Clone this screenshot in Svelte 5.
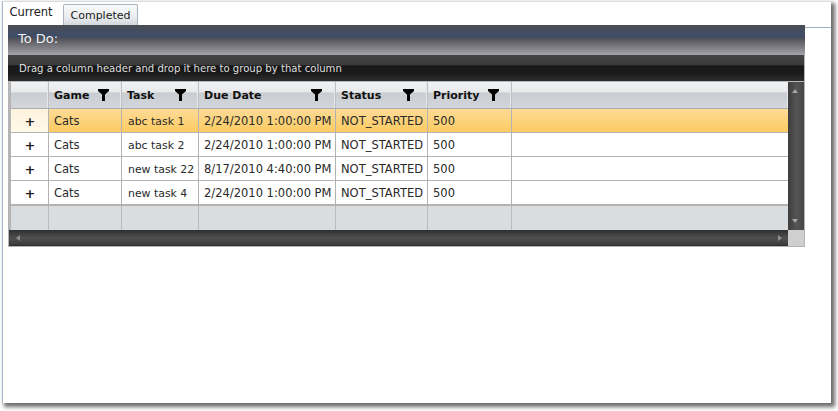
<script>
  const columns = [
    { name: 'Game', width: 73 },
    { name: 'Task', width: 77 },
    { name: 'Due Date', width: 137 },
    { name: 'Status', width: 92 },
    { name: 'Priority', width: 84 }
  ];
  const rows = [
    { task: 'abc task 1', due: '2/24/2010 1:00:00 PM', selected: true },
    { task: 'abc task 2', due: '2/24/2010 1:00:00 PM' },
    { task: 'new task 22', due: '8/17/2010 4:40:00 PM' },
    { task: 'new task 4', due: '2/24/2010 1:00:00 PM' }
  ];
</script>

<div class="page">
<div class="window">
  <div class="tabs">
    <div class="tab active">Current</div>
    <div class="tab">Completed</div>
    <div class="tabline"></div>
  </div>
  <div class="content">
    <div class="title">To Do:</div>
    <div class="gridbox">
      <div class="grouppanel">Drag a column header and drop it here to group by that column</div>
      <div class="gridbody">
        <div class="datacol">
          <div class="gridrow head">
            <div class="cell indent"></div>
            {#each columns as c}
              <div class="cell" style="width:{c.width}px">
                <span class="hname">{c.name}</span>
                <svg class="funnel" width="11" height="12" viewBox="0 0 11 12"><path d="M0 0H11V2L7 5.5V12H4V5.5L0 2Z" fill="#000"/></svg>
              </div>
            {/each}
            <div class="cell fill"></div>
          </div>
          {#each rows as r}
            <div class="gridrow data" class:selected={r.selected}>
              <div class="cell indent"><span class="plus">+</span></div>
              <div class="cell" style="width:73px">Cats</div>
              <div class="cell task" style="width:77px">{r.task}</div>
              <div class="cell" style="width:137px">{r.due}</div>
              <div class="cell" style="width:92px">NOT_STARTED</div>
              <div class="cell" style="width:84px">500</div>
              <div class="cell fill"></div>
            </div>
          {/each}
          <div class="gridrow foot">
            <div class="cell indent"></div>
            {#each columns as c}
              <div class="cell" style="width:{c.width}px"></div>
            {/each}
            <div class="cell fill"></div>
          </div>
        </div>
        <div class="vscroll">
          <i class="arrow up"></i>
          <i class="arrow down"></i>
        </div>
      </div>
      <div class="hbar">
        <div class="hscroll">
          <i class="arrow left"></i>
          <i class="arrow right"></i>
        </div>
        <div class="corner"></div>
      </div>
    </div>
  </div>
</div>
</div>

<style>
  :global(body) {
    margin: 0;
    background: #fff;
  }
  .page {
    box-sizing: border-box;
    height: 411px;
    padding: 1px 0 0 2px;
    overflow: hidden;
  }
  .window {
    box-sizing: border-box;
    width: 829px;
    height: 402px;
    background: #fff;
    border-top: 1px solid #dcdcdc;
    border-left: 1px solid #a9b8cc;
    box-shadow: 3px 3px 4px 1px rgba(60, 60, 60, 0.75);
    font: 11.5px/1 "DejaVu Sans", Verdana, sans-serif;
    color: #2a2a2a;
  }
  .tabs {
    display: flex;
    align-items: flex-end;
    height: 25px;
  }
  .tab {
    box-sizing: border-box;
    display: flex;
    align-items: center;
    justify-content: center;
    color: #222;
  }
  .tab.active {
    width: 60px;
    height: 25px;
    padding: 0 4px 5px 0;
    background: #fff;
    position: relative;
    z-index: 2;
    margin-bottom: -1px;
  }
  .tab:not(.active) {
    width: 75px;
    height: 23px;
    font-size: 11px;
    border: 1px solid #a9b4be;
    border-bottom-color: #8f9aa5;
    border-radius: 2px 2px 0 0;
    background: linear-gradient(#f8f9fa, #e9ebee 60%, #cfd4d9);
  }
  .tabline {
    flex: 1;
    height: 1px;
    background: #9fb0bd;
    margin-bottom: -1px;
  }
  .content {
    margin-left: 5px;
    width: 797px;
    position: relative;
    z-index: 3;
    margin-top: -2px;
  }
  .title {
    box-sizing: border-box;
    height: 30px;
    padding: 7px 0 0 10px;
    color: #f2f2f2;
    font-size: 13px;
    background: linear-gradient(#4a4d55 0, #3e4d69 38%, #454a56 40%, #6b6b70 62%, #a5a3ae 100%);
  }
  .gridbox {
    box-sizing: border-box;
    width: 797px;
    height: 192px;
    border-right: 1px solid #b4b4b4;
    border-bottom: 1px solid #b4b4b4;
    border-left: 1px solid #b4b4b4;
    background: #fff;
  }
  .grouppanel {
    box-sizing: border-box;
    height: 27px;
    margin-left: -1px;
    width: 796px;
    padding: 9px 0 0 11px;
    color: #dedede;
    font-size: 10.1px;
    background: linear-gradient(#454545 0, #3a3a3a 38%, #171717 42%, #1b1b1b 70%, #2b2d30 100%);
    border-bottom: 1px solid #b8b8b8;
  }
  .gridbody {
    display: flex;
    height: 148px;
    border-left: 2px solid #b5b5b5;
  }
  .datacol {
    flex: 1;
    display: flex;
    flex-direction: column;
    background: #fff;
  }
  .gridrow {
    display: flex;
    box-sizing: border-box;
    border-bottom: 1px solid #b3b3b3;
  }
  .cell {
    box-sizing: border-box;
    display: flex;
    align-items: center;
    padding: 3px 0 0 5px;
    border-right: 1px solid #b3b3b3;
    flex: none;
  }
  .cell.task {
    font-size: 10.9px;
    padding-left: 6px;
  }
  .cell.indent {
    width: 38px;
    justify-content: center;
    padding: 1px 0 0;
  }
  .cell.fill {
    flex: 1;
    border-right: 0;
  }
  .head {
    height: 27px;
    background: linear-gradient(#f0f1f3 0, #e9eaec 38%, #c9ccd0 42%, #d3d6da 100%);
    border-bottom-color: #aaaab2;
  }
  .head .cell {
    border-right-color: #bcbfc3;
    box-shadow: inset -1px 0 0 #e8e9eb;
    position: relative;
    padding-top: 1px;
  }
  .hname {
    font-weight: bold;
    color: #111;
    font-size: 11px;
  }
  .funnel {
    position: absolute;
    left: 49px;
    top: 7px;
  }
  .head .cell:nth-child(3) .funnel { left: 53px; }
  .head .cell:nth-child(4) .funnel { left: 112px; }
  .head .cell:nth-child(5) .funnel { left: 67px; }
  .head .cell:nth-child(6) .funnel { left: 60px; }
  .data {
    height: 24px;
  }
  .data.selected {
    background: linear-gradient(#fddb96, #fccb62);
  }
  .data.selected .indent {
    background: linear-gradient(#fdf3dd, #fff9ea);
  }
  .plus {
    font: bold 13px/1 "DejaVu Sans", sans-serif;
    color: #222;
    margin-left: 1px;
  }
  .foot {
    height: 25px;
    background: #dadde0;
    border-top: 1px solid #b3b3b3;
    border-bottom: 0;
  }
  .foot .cell {
    border-right-color: #b9bbbe;
  }
  .vscroll {
    position: relative;
    width: 16px;
    flex: none;
    background: linear-gradient(90deg, #3d3d3d, #555 55%, #454545);
  }
  .hbar {
    display: flex;
    height: 16px;
  }
  .hscroll {
    position: relative;
    flex: 1;
    background: linear-gradient(#2f2f2f 0, #4f4f4f 50%, #3e3e3e 90%, #2a2a2a 100%);
  }
  .corner {
    width: 16px;
    background: #cfcfcf;
  }
  .arrow {
    position: absolute;
    width: 0;
    height: 0;
  }
  .arrow.up {
    top: 7px;
    left: 4px;
    border: 3px solid transparent;
    border-top: 0;
    border-left-width: 3.5px;
    border-right-width: 3.5px;
    border-bottom: 4px solid #a5a5a5;
  }
  .arrow.down {
    bottom: 7px;
    left: 4px;
    border: 3px solid transparent;
    border-bottom: 0;
    border-left-width: 3.5px;
    border-right-width: 3.5px;
    border-top: 4px solid #a5a5a5;
  }
  .arrow.left {
    top: 5px;
    left: 7px;
    border: 3px solid transparent;
    border-left: 0;
    border-right: 4px solid #8f8f8f;
  }
  .arrow.right {
    top: 5px;
    right: 6px;
    border: 3px solid transparent;
    border-right: 0;
    border-left: 4px solid #8f8f8f;
  }
</style>
